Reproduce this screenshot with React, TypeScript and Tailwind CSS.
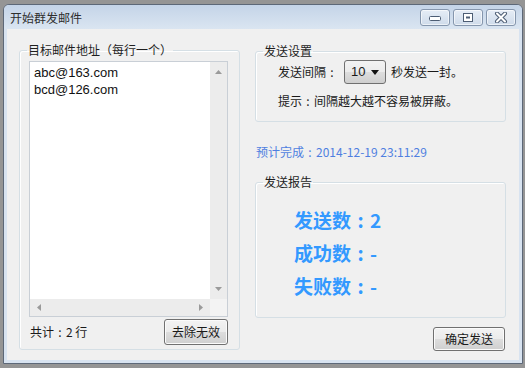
import React from 'react';

const emails = ['abc@163.com', 'bcd@126.com'];

const Colon: React.FC = () => <span className="inline-block w-[1em] text-center">:</span>;

const GroupBox: React.FC<{ title: string; className?: string; bodyClass?: string; children: React.ReactNode }> = ({
  title,
  className,
  bodyClass,
  children,
}) => (
  <fieldset className={`rounded-[3px] border border-[#d5dfe5] shadow-[inset_1px_1px_0_#ffffff] ${className ?? ''}`}>
    <legend className="ml-[7px] px-[1px] text-[12px] leading-[16px] text-[#1e1e1e]">{title}</legend>
    <div className={bodyClass}>{children}</div>
  </fieldset>
);

const Button: React.FC<{ className?: string; children: React.ReactNode }> = ({ className, children }) => (
  <button className={`flex items-center justify-center rounded-[3px] border border-[#707070] bg-[linear-gradient(#f3f3f3_0%,#ebebeb_50%,#dddddd_51%,#cfcfcf_100%)] shadow-[inset_0_0_0_1px_#fbfbfb] text-[12px] leading-[14px] text-[#1a1a1a] ${className ?? ''}`}>
    {children}
  </button>
);

const CaptionButton: React.FC<{ children: React.ReactNode }> = ({ children }) => (
  <div className="flex h-[17px] w-[30px] items-center justify-center rounded-[3px] border border-[#8596ad] bg-[linear-gradient(#e6edf6,#cfdbea)] shadow-[inset_0_0_0_1px_rgba(255,255,255,0.6)]">
    {children}
  </div>
);

const Arrow: React.FC<{ dir: 'up' | 'down' | 'left' | 'right' }> = ({ dir }) => {
  const pts = {
    up: '0,4 3.5,0 7,4',
    down: '0,0 3.5,4 7,0',
    left: '4,0 0,3.5 4,7',
    right: '0,0 4,3.5 0,7',
  }[dir];
  const vertical = dir === 'up' || dir === 'down';
  return (
    <svg width={vertical ? 7 : 4} height={vertical ? 4 : 7}>
      <polygon points={pts} fill="#9a9a9a" />
    </svg>
  );
};

export default function App() {
  return (
    <div className="h-[368px] w-[525px] overflow-hidden bg-[#959595] pl-[3px] pt-[4px] font-['Noto_Sans_CJK_SC',sans-serif]">
      <div className="flex h-[360px] w-[520px] flex-col rounded-t-[6px] border border-[#5d6878] bg-[#d8e3f0] px-[3px] pb-[3px]">
        {/* title bar */}
        <div className="-mx-[3px] flex h-[24px] items-start rounded-t-[5px] bg-[linear-gradient(#c4d4e8,#dae5f1)] px-[3px]">
          <span className="ml-[3px] mt-[6px] text-[12px] leading-[14px] text-[#2e2e2e]">开始群发邮件</span>
          <div className="ml-auto mr-[3px] mt-[4px] flex gap-[3px]">
            <CaptionButton>
              <svg width="14" height="8">
                <rect x="1.5" y="2.5" width="11" height="4" rx="1" fill="#ffffff" stroke="#4d5d74" />
              </svg>
            </CaptionButton>
            <CaptionButton>
              <svg width="12" height="10">
                <rect x="1.5" y="0.5" width="9" height="8" fill="#ffffff" stroke="#4d5d74" />
                <rect x="4" y="3.5" width="4" height="2" fill="#4d5d74" />
              </svg>
            </CaptionButton>
            <CaptionButton>
              <svg width="14" height="11">
                <path d="M3 1.5 L11 9.5 M11 1.5 L3 9.5" stroke="#4d5d74" strokeWidth="4" strokeLinecap="round" />
                <path d="M3 1.5 L11 9.5 M11 1.5 L3 9.5" stroke="#ffffff" strokeWidth="2" strokeLinecap="round" />
              </svg>
            </CaptionButton>
          </div>
        </div>

        {/* client area */}
        <div className="flex flex-1 bg-[#f0f0f0] pl-[12px] pt-[13px] text-[12px] text-[#1a1a1a]">
          {/* left: address list */}
          <GroupBox title="目标邮件地址（每行一个）" className="h-[308px] w-[221px]" bodyClass="pl-[9px] pr-[11px]">
            <div className="mt-[3px] flex h-[256px] w-[199px] flex-col border border-[#c9cfd6] bg-white">
              <div className="flex min-h-0 flex-1">
                <div className="flex-1 pl-[4px] pt-[2px] font-['Liberation_Sans',sans-serif] text-[13px] leading-[17px] text-[#111]">
                  {emails.map((e) => (
                    <div key={e}>{e}</div>
                  ))}
                </div>
                <div className="flex w-[17px] flex-col items-center justify-between bg-[#ececec] py-[8px]">
                  <Arrow dir="up" />
                  <Arrow dir="down" />
                </div>
              </div>
              <div className="flex h-[17px]">
                <div className="flex flex-1 items-center justify-between bg-[#ececec] px-[7px]">
                  <Arrow dir="left" />
                  <Arrow dir="right" />
                </div>
                <div className="w-[17px] bg-[#f3f3f3]" />
              </div>
            </div>
            <div className="mt-[2px] flex items-center">
              <span className="ml-[1px] leading-[16px]">
                共计<Colon />2 行
              </span>
              <Button className="ml-auto h-[26px] w-[64px]">去除无效</Button>
            </div>
          </GroupBox>

          {/* right column */}
          <div className="ml-[15px] flex w-[251px] flex-col">
            <GroupBox title="发送设置" className="mt-[1px] h-[79px]" bodyClass="pl-[22px]">
              <div className="mt-[1px] flex h-[24px] items-center">
                <span>
                  发送间隔<Colon />
                </span>
                <div className="ml-[6px] flex h-[24px] w-[42px] items-center justify-between rounded-[3px] border border-[#707070] bg-[linear-gradient(#f3f3f3_0%,#ebebeb_50%,#dddddd_51%,#cfcfcf_100%)] pl-[6px] pr-[6px] font-['Liberation_Sans',sans-serif] text-[13px]">
                  <span>10</span>
                  <svg width="8" height="5">
                    <polygon points="0,0 8,0 4,5" fill="#111" />
                  </svg>
                </div>
                <span className="ml-[5px]">秒发送一封。</span>
              </div>
              <div className="mt-[8px] leading-[17px]">
                提示<Colon />间隔越大越不容易被屏蔽。
              </div>
            </GroupBox>

            <div className="ml-[1px] mt-[21px] leading-[17px] text-[#4f7fe0]">
              预计完成<Colon />2014-12-19 23:11:29
            </div>

            <GroupBox title="发送报告" className="mt-[14px] h-[144px]" bodyClass="pl-[38px] pt-[13px]">
              <div className="text-[19px] font-bold leading-[33px] text-[#3399ff]">
                <div>
                  发送数<Colon />2
                </div>
                <div>
                  成功数<Colon />-
                </div>
                <div>
                  失败数<Colon />-
                </div>
              </div>
            </GroupBox>

            <Button className="mr-[1px] mt-[9px] h-[24px] w-[72px] self-end">确定发送</Button>
          </div>
        </div>
      </div>
    </div>
  );
}
